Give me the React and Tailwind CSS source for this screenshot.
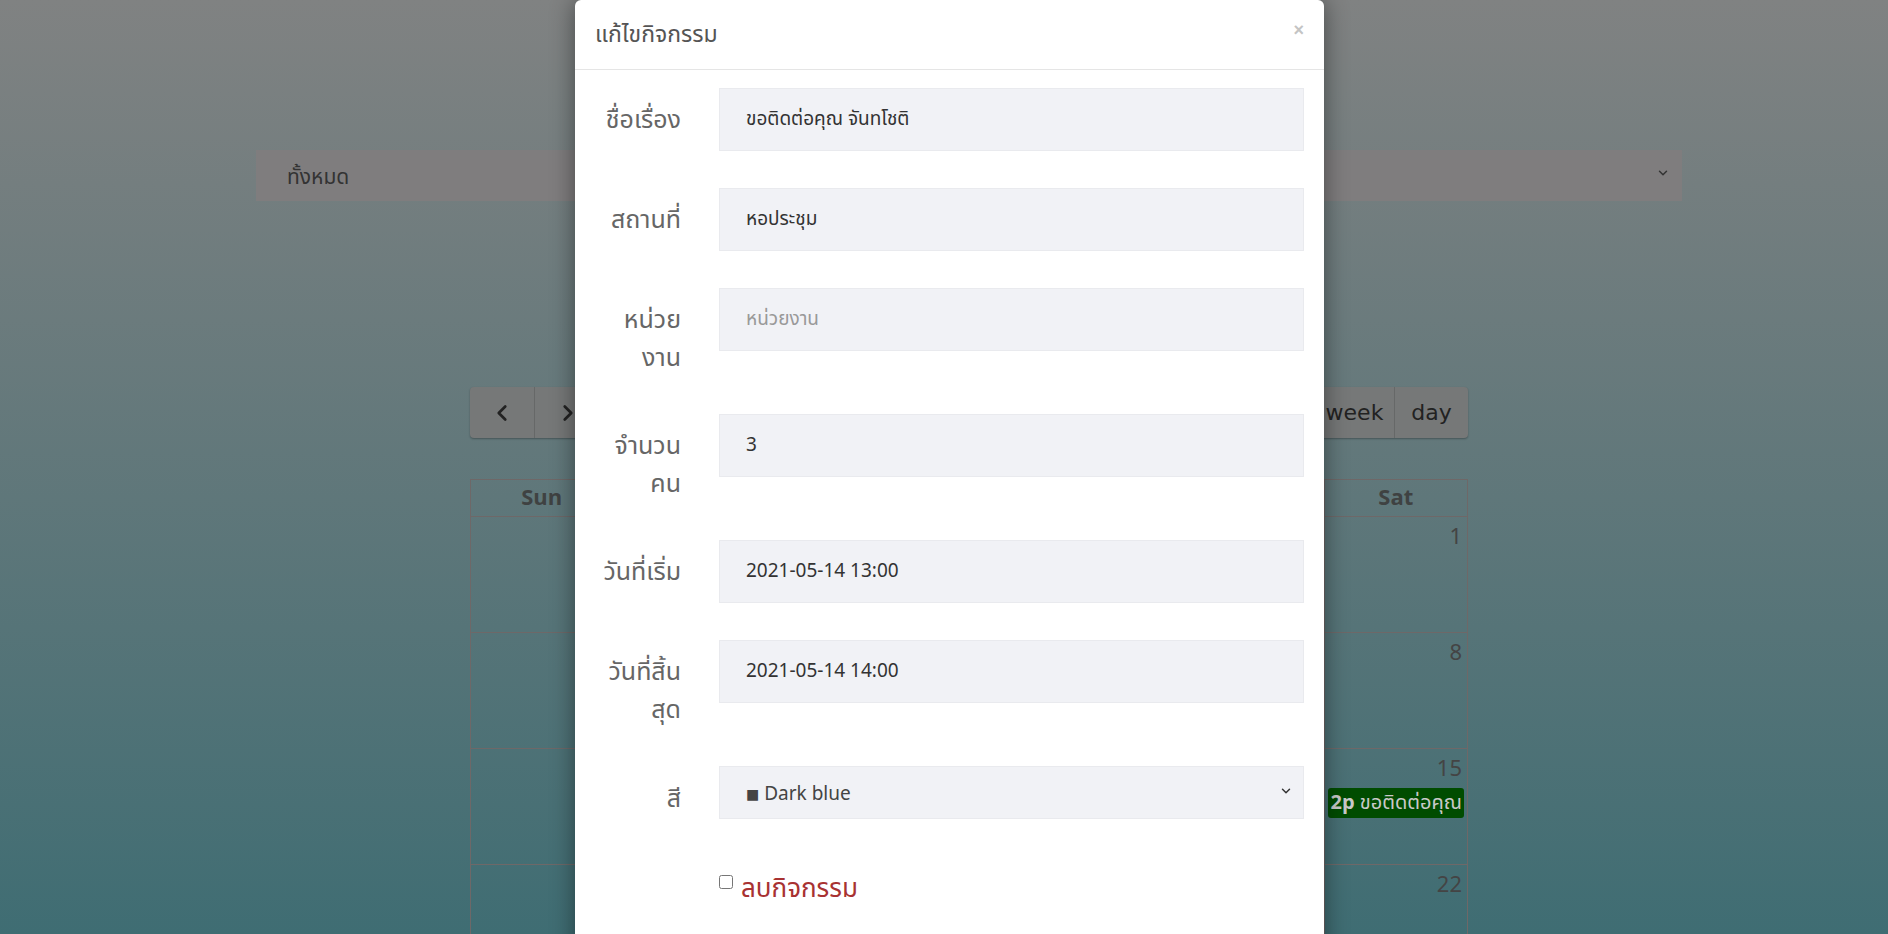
import React from 'react';
import { ChevronDown, ChevronLeft, ChevronRight } from 'lucide-react';

const thai = { fontFamily: '"Noto Sans Thai", "Noto Sans", "DejaVu Sans", sans-serif' };

const weeks = [
  ['', '', '', '', '', '', '1'],
  ['', '', '', '', '', '', '8'],
  ['', '', '', '', '', '', '15'],
  ['', '', '', '', '', '', '22'],
];
const days = ['Sun', 'Mon', 'Tue', 'Wed', 'Thu', 'Fri', 'Sat'];

const FormRow = ({ label, children }) => (
  <div className="flex items-start gap-[38px] mb-[37px]">
    <label className="w-[91px] shrink-0 text-right text-[25px] leading-[38px] pt-[13px] text-[#666]">
      {label}
    </label>
    <div className="w-[585px]">{children}</div>
  </div>
);

const TextBox = ({ value, placeholder }) => (
  <div className="h-[63px] bg-[#f1f2f6] border border-[#e9eaee] flex items-center pl-[26px] pt-[2px] text-[19px]">
    {value ? <span className="text-[#333]">{value}</span> : <span className="text-[#999]">{placeholder}</span>}
  </div>
);

const EditEventModal = () => (
  <div className="absolute left-[575px] top-0 w-[749px] h-[960px] bg-white rounded-t-[6px] shadow-[0_0_24px_rgba(0,0,0,0.45)]">
    <div className="h-[70px] border-b border-[#e5e5e5] flex items-center justify-between pl-[20px] pr-[20px]">
      <h4 className="text-[23px] text-[#555] pt-[2px]">แก้ไขกิจกรรม</h4>
      <span className="text-[18px] font-bold text-[#c4c4c4] -mt-[8px]" style={{ fontFamily: '"Liberation Sans", sans-serif' }}>×</span>
    </div>
    <div className="pl-[15px] pt-[18px]">
      <FormRow label="ชื่อเรื่อง">
        <TextBox value="ขอติดต่อคุณ จันทโชติ" />
      </FormRow>
      <FormRow label="สถานที่">
        <TextBox value="หอประชุม" />
      </FormRow>
      <FormRow label={<>หน่วย<br />งาน</>}>
        <TextBox placeholder="หน่วยงาน" />
      </FormRow>
      <FormRow label={<>จำนวน<br />คน</>}>
        <TextBox value="3" />
      </FormRow>
      <FormRow label="วันที่เริ่ม">
        <TextBox value="2021-05-14 13:00" />
      </FormRow>
      <FormRow label={<>วันที่สิ้น<br />สุด</>}>
        <TextBox value="2021-05-14 14:00" />
      </FormRow>
      <div className="flex items-start gap-[38px] mb-[52px]">
        <label className="w-[91px] shrink-0 text-right text-[25px] leading-[38px] pt-[14px] text-[#666]">สี</label>
        <div className="w-[585px] h-[53px] bg-[#f1f2f6] border border-[#e9eaee] flex items-center justify-between pl-[26px] pr-[10px] pt-[6px] text-[19px] text-[#444]">
          <span><span className="text-[14px] align-[1px]">■</span> Dark blue</span>
          <ChevronDown className="w-[14px] h-[14px] text-[#333] -mt-[10px]" strokeWidth={2.5} />
        </div>
      </div>
      <div className="flex items-start pl-[129px] gap-[8px]">
        <input type="checkbox" className="w-[14px] h-[14px] mt-[4px] accent-[#666]" readOnly />
        <span className="text-[26px] leading-[36px] text-[#a83232]">ลบกิจกรรม</span>
      </div>
    </div>
  </div>
);

export default function App() {
  return (
    <div className="relative h-[934px] overflow-hidden bg-gradient-to-b from-[#808282] to-[#3f6d73]" style={thai}>
      <div className="pt-[150px]">
        <div className="ml-[256px] w-[1426px] h-[51px] bg-[#7f7d7e] flex items-center justify-between pl-[31px] pr-[12px] pt-[4px] text-[21px] text-[#333]">
          <span>ทั้งหมด</span>
          <ChevronDown className="w-[14px] h-[14px] text-[#333] -mt-[10px]" strokeWidth={2.5} />
        </div>

        <div className="ml-[470px] w-[998px] mt-[186px]">
          <div className="flex justify-between h-[51px]">
            <div className="flex rounded-[4px] bg-[#767878] shadow-[0_1px_2px_rgba(0,0,0,0.3)]">
              <div className="w-[65px] flex items-center justify-center border-r border-[#666868]">
                <ChevronLeft className="w-[26px] h-[26px] text-[#222]" strokeWidth={2.5} />
              </div>
              <div className="w-[65px] flex items-center justify-center">
                <ChevronRight className="w-[26px] h-[26px] text-[#222]" strokeWidth={2.5} />
              </div>
            </div>
            <div className="flex rounded-[4px] bg-[#767878] shadow-[0_1px_2px_rgba(0,0,0,0.3)] text-[22px] text-[#222]" style={{ fontFamily: '"DejaVu Sans", sans-serif' }}>
              <div className="w-[82px] flex items-center justify-center border-r border-[#666868]">month</div>
              <div className="w-[80px] flex items-center justify-center border-r border-[#666868]">week</div>
              <div className="w-[73px] flex items-center justify-center">day</div>
            </div>
          </div>

          <div className="mt-[41px] border border-[#6e6868]">
            <div className="grid grid-cols-7 h-[37px] border-b border-[#6e6868]">
              {days.map((d) => (
                <div key={d} className="flex items-center justify-center text-[22px] font-bold text-[#3f4242] border-r border-[#6e6868] last:border-r-0">
                  {d}
                </div>
              ))}
            </div>
            {weeks.map((w, i) => (
              <div key={i} className="grid grid-cols-7 h-[116px] border-b border-[#6e6868] last:border-b-0">
                {w.map((n, j) => (
                  <div key={j} className="border-r border-[#6e6868] last:border-r-0 px-[3px] pt-[8px] flex flex-col items-stretch">
                    <div className="text-right text-[22px] leading-[26px] text-[#444] pr-[2px]">{n}</div>
                    {n === '15' && (
                      <div className="mt-[5px] bg-[#004c00] rounded-[3px] text-[20px] leading-[30px] text-[#c9c9c9] whitespace-nowrap overflow-hidden text-right pr-[2px]">
                        <b>2p</b> ขอติดต่อคุณ
                      </div>
                    )}
                  </div>
                ))}
              </div>
            ))}
          </div>
        </div>
      </div>

      <EditEventModal />
    </div>
  );
}
